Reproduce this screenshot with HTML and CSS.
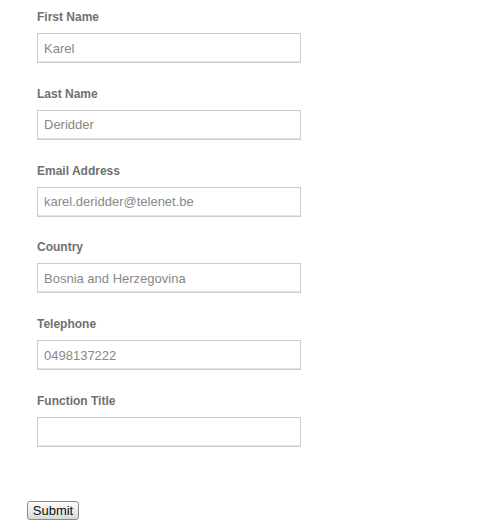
FILE: index.html
```html
<!DOCTYPE html>
<html>
<head>
<meta charset="utf-8">
<link rel="stylesheet" href="styles.css">
</head>
<body>
<form class="form">
  <div class="fields">
    <div class="field">
      <label class="label">First Name</label>
      <input class="input" type="text" value="Karel">
    </div>
    <div class="field">
      <label class="label">Last Name</label>
      <input class="input" type="text" value="Deridder">
    </div>
    <div class="field">
      <label class="label">Email Address</label>
      <input class="input" type="text" value="karel.deridder@telenet.be">
    </div>
    <div class="field">
      <label class="label">Country</label>
      <input class="input" type="text" value="Bosnia and Herzegovina">
    </div>
    <div class="field">
      <label class="label">Telephone</label>
      <input class="input" type="text" value="0498137222">
    </div>
    <div class="field">
      <label class="label">Function Title</label>
      <input class="input" type="text" value="">
    </div>
  </div>
  <div class="actions">
    <button class="submit" type="button">Submit</button>
  </div>
</form>
</body>
</html>
```
FILE: styles.css
```css
html, body {
  margin: 0;
  padding: 0;
  background: #ffffff;
}
body {
  font-family: "Liberation Sans", Arial, sans-serif;
}
.form {
  margin: 0;
  padding-top: 10px;
}
.fields {
  display: flex;
  flex-direction: column;
  gap: 23.8px;
  padding-left: 37px;
}
.field {
  display: flex;
  flex-direction: column;
  align-items: flex-start;
}
.label {
  display: block;
  font-size: 12px;
  line-height: 14px;
  font-weight: bold;
  color: #707070;
  margin-bottom: 9px;
}
.input {
  box-sizing: border-box;
  width: 264px;
  height: 30px;
  margin: 0;
  padding: 0 6px;
  border: 1px solid #cccccc;
  box-shadow: inset 0 -1px 0 #e4e4e4;
  border-radius: 0;
  font-family: "Liberation Sans", Arial, sans-serif;
  font-size: 13px;
  color: #888888;
  background: #ffffff;
  outline: none;
}
.actions {
  padding-left: 27px;
  padding-top: 54px;
}
.submit {
  box-sizing: border-box;
  width: 52px;
  height: 19px;
  margin: 0;
  padding: 0;
  border: 1px solid #8c8c8c;
  border-radius: 3px;
  background: linear-gradient(#fdfdfd, #e9e9e9 55%, #d8d8d8);
  font-family: "Liberation Sans", Arial, sans-serif;
  font-size: 13px;
  line-height: 16px;
  color: #111111;
}
```
